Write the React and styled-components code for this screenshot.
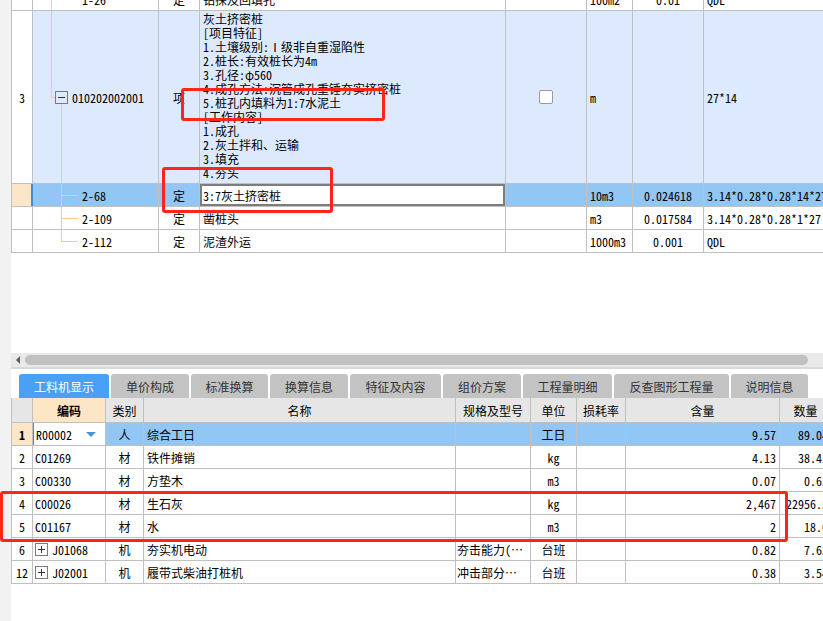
import React from 'react'
import styled, { createGlobalStyle } from 'styled-components'

const GlobalStyle = createGlobalStyle`
  *, *::before, *::after { box-sizing: border-box; }
  html, body { margin: 0; padding: 0; background: #fff; }
  body {
    font-family: "Noto Sans Mono CJK SC", "Noto Sans CJK SC", sans-serif;
    font-size: 12px;
    color: #000;
    overflow: hidden;
  }
`

const LINE = '#c0c0c0'
const TREE = '#f8c98c'
const SEL = '#92c6f4'
const LIGHT = '#dde9fd'
const ORANGE = '#fde6c6'

const Page = styled.div`
  position: relative;
  display: flex;
  width: 823px;
  height: 621px;
  overflow: hidden;
  background: #fff;
`

const LeftStrip = styled.div`
  flex: 0 0 11px;
  background: #f2f2f2;
`

const Main = styled.div`
  flex: 1;
  min-width: 0;
  display: flex;
  flex-direction: column;
  overflow: hidden;
`

const Grid = styled.div`
  width: max-content;
  border-left: 1px solid ${LINE};
  margin-top: ${p => p.$offset || 0}px;
`

const Row = styled.div`
  display: flex;
  height: ${p => p.$h || 23}px;
  border-bottom: 1px solid ${LINE};
  background: ${p => p.$bg || '#fff'};
`

const Cell = styled.div`
  position: relative;
  flex: 0 0 ${p => p.$w}px;
  width: ${p => p.$w}px;
  border-right: 1px solid ${LINE};
  display: flex;
  align-items: center;
  justify-content: ${p => (p.$align === 'center' ? 'center' : p.$align === 'right' ? 'flex-end' : 'flex-start')};
  padding: 0 ${p => (p.$pad != null ? p.$pad : 3)}px;
  background: ${p => p.$bg || 'transparent'};
  font-weight: ${p => (p.$bold ? 700 : 400)};
  white-space: nowrap;
  overflow: hidden;
`

const SelNum = styled(Cell)`
  background: ${ORANGE};
  border-right: 1px solid #3b8de0;
  box-shadow: inset -1px 0 0 #3b8de0;
`

const EditCell = styled(Cell)`
  background: #fff;
  box-shadow: inset 0 0 0 2px #7d7d7d;
`

const DescCell = styled(Cell)`
  display: block;
  padding: 1px 3px 0;
  line-height: 14px;
  white-space: pre;
`

const line = (pos, size) => `linear-gradient(${TREE}, ${TREE}) ${pos} / ${size} no-repeat`

const treeBg = {
  through: line('18px 0', '1px 100%'),
  parent: [line('18px 0', '1px 50%'), line('18px 50%', '5px 1px'), line('28px 100%', '1px 50%')].join(', '),
  child: [line('28px 0', '1px 100%'), line('28px 50%', '17px 1px')].join(', '),
  last: [line('28px 0', '1px 50%'), line('28px 50%', '17px 1px')].join(', ')
}

const TreeCell = styled(Cell)`
  padding-left: ${p => (p.$kind === 'parent' ? 22 : 49)}px;
  background: ${p => treeBg[p.$kind]}${p => (p.$fill ? `, ${p.$fill}` : '')};
`

const ToggleBox = styled.span`
  position: relative;
  flex: 0 0 13px;
  width: 13px;
  height: 13px;
  margin-right: 4px;
  border: 1px solid #7a7a7a;
  background: ${p => p.$bg || '#fff'};
  &::before {
    content: '';
    position: absolute;
    left: 2px;
    right: 2px;
    top: 5px;
    height: 1px;
    background: #333;
  }
  &::after {
    content: '';
    display: ${p => (p.$plus ? 'block' : 'none')};
    position: absolute;
    top: 2px;
    bottom: 2px;
    left: 5px;
    width: 1px;
    background: #333;
  }
`

const Check = styled.span`
  width: 14px;
  height: 14px;
  border: 1px solid #9a9a9a;
  border-radius: 2px;
  background: #fff;
`

const Blank = styled.div`
  flex: 0 0 100px;
`

const ScrollBar = styled.div`
  flex: 0 0 14px;
  display: flex;
  align-items: center;
  background: #e9e9e9;
  padding-left: 5px;
`

const ArrowLeft = styled.span`
  width: 0;
  height: 0;
  border-top: 4px solid transparent;
  border-bottom: 4px solid transparent;
  border-right: 4px solid #5c5c5c;
  margin-right: 5px;
`

const Thumb = styled.div`
  width: 783px;
  height: 10px;
  border-radius: 5px;
  background: #c1c1c1;
`

const Divider = styled.div`
  flex: 0 0 2px;
  background: #d9d9d9;
`

const TabBar = styled.div`
  display: flex;
  gap: 2px;
  padding: 5px 0 0 8px;
`

const Tab = styled.div`
  flex: 0 0 ${p => p.$w}px;
  height: 24px;
  display: flex;
  align-items: center;
  justify-content: center;
  border-radius: 3px 3px 0 0;
  font-family: "Noto Sans CJK SC", sans-serif;
  font-size: 12px;
  color: ${p => (p.$active ? '#fff' : '#333')};
  background: ${p => (p.$active ? '#4aa0f6' : '#c3c3c3')};
`

const HeadRow = styled(Row)`
  background: #e6e6e6;
`

const Dropdown = styled.span`
  margin-left: auto;
  margin-right: 6px;
  width: 0;
  height: 0;
  border-left: 5px solid transparent;
  border-right: 5px solid transparent;
  border-top: 5px solid #4f8fd6;
`

const CodeEdit = styled(Cell)`
  background: #fff;
  box-shadow: inset 1px 0 0 #3b8de0;
`

const Mark = styled.div`
  position: absolute;
  left: ${p => p.$x}px;
  top: ${p => p.$y}px;
  width: ${p => p.$w}px;
  height: ${p => p.$h}px;
  border: 3px solid #ff2619;
  border-radius: 3px;
  pointer-events: none;
`

const TW = [21, 126, 41, 306, 81, 46, 71, 150]
const BW = [21, 73, 38, 312, 75, 46, 49, 154, 52]

const desc = `灰土挤密桩
[项目特征]
1.土壤级别:Ⅰ级非自重湿陷性
2.桩长:有效桩长为4m
3.孔径:φ560
4.成孔方法:沉管成孔重锤夯实挤密桩
5.桩孔内填料为1:7水泥土
[工作内容]
1.成孔
2.灰土拌和、运输
3.填充
4.夯头`

const subRows = [
  { code: '2-109', name: '凿桩头', unit: 'm3', qty: '0.017584', expr: '3.14*0.28*0.28*1*27', kind: 'child' },
  { code: '2-112', name: '泥渣外运', unit: '1000m3', qty: '0.001', expr: 'QDL', kind: 'last' }
]

const tabs = [
  ['工料机显示', 90], ['单价构成', 78], ['标准换算', 77], ['换算信息', 78], ['特征及内容', 91],
  ['组价方案', 78], ['工程量明细', 89], ['反查图形工程量', 115], ['说明信息', 77]
]

const materials = [
  { n: '2', code: 'C01269', type: '材', name: '铁件摊销', unit: 'kg', amt: '4.13', qty: '38.41' },
  { n: '3', code: 'C00330', type: '材', name: '方垫木', unit: 'm3', amt: '0.07', qty: '0.65' },
  { n: '4', code: 'C00026', type: '材', name: '生石灰', unit: 'kg', amt: '2,467', qty: '22956.5' },
  { n: '5', code: 'C01167', type: '材', name: '水', unit: 'm3', amt: '2', qty: '18.6' },
  { n: '6', code: 'J01068', type: '机', name: '夯实机电动', spec: '夯击能力(…', unit: '台班', amt: '0.82', qty: '7.63', plus: true },
  { n: '12', code: 'J02001', type: '机', name: '履带式柴油打桩机', spec: '冲击部分…', unit: '台班', amt: '0.38', qty: '3.54', plus: true }
]

const TopTable = () => (
  <Grid $offset={-12}>
    <Row>
      <Cell $w={TW[0]} />
      <TreeCell $w={TW[1]} $kind="through">1-26</TreeCell>
      <Cell $w={TW[2]} $align="center">定</Cell>
      <Cell $w={TW[3]}>钻探及回填孔</Cell>
      <Cell $w={TW[4]} />
      <Cell $w={TW[5]}>100m2</Cell>
      <Cell $w={TW[6]} $align="center">0.01</Cell>
      <Cell $w={TW[7]}>QDL</Cell>
    </Row>
    <Row $h={173} $bg={LIGHT}>
      <Cell $w={TW[0]} $align="center" $bg="#fff">3</Cell>
      <TreeCell $w={TW[1]} $kind="parent">
        <ToggleBox $bg={LIGHT} />
        010202002001
      </TreeCell>
      <Cell $w={TW[2]} $align="center">项</Cell>
      <DescCell $w={TW[3]}>{desc}</DescCell>
      <Cell $w={TW[4]} $align="center"><Check /></Cell>
      <Cell $w={TW[5]}>m</Cell>
      <Cell $w={TW[6]} />
      <Cell $w={TW[7]}>27*14</Cell>
    </Row>
    <Row $bg={SEL}>
      <SelNum $w={TW[0]} />
      <TreeCell $w={TW[1]} $kind="child">2-68</TreeCell>
      <Cell $w={TW[2]} $align="center">定</Cell>
      <EditCell $w={TW[3]}>3:7灰土挤密桩</EditCell>
      <Cell $w={TW[4]} />
      <Cell $w={TW[5]}>10m3</Cell>
      <Cell $w={TW[6]} $align="center">0.024618</Cell>
      <Cell $w={TW[7]}>3.14*0.28*0.28*14*27</Cell>
    </Row>
    {subRows.map(r => (
      <Row key={r.code}>
        <Cell $w={TW[0]} />
        <TreeCell $w={TW[1]} $kind={r.kind}>{r.code}</TreeCell>
        <Cell $w={TW[2]} $align="center">定</Cell>
        <Cell $w={TW[3]}>{r.name}</Cell>
        <Cell $w={TW[4]} />
        <Cell $w={TW[5]}>{r.unit}</Cell>
        <Cell $w={TW[6]} $align="center">{r.qty}</Cell>
        <Cell $w={TW[7]}>{r.expr}</Cell>
      </Row>
    ))}
  </Grid>
)

const BottomTable = () => (
  <Grid>
    <HeadRow $h={25}>
      <Cell $w={BW[0]} />
      <Cell $w={BW[1]} $align="center" $bg={ORANGE} $bold>编码</Cell>
      <Cell $w={BW[2]} $align="center">类别</Cell>
      <Cell $w={BW[3]} $align="center">名称</Cell>
      <Cell $w={BW[4]} $align="center">规格及型号</Cell>
      <Cell $w={BW[5]} $align="center">单位</Cell>
      <Cell $w={BW[6]} $align="center">损耗率</Cell>
      <Cell $w={BW[7]} $align="center">含量</Cell>
      <Cell $w={BW[8]} $align="center">数量</Cell>
    </HeadRow>
    <Row $bg={SEL}>
      <Cell $w={BW[0]} $align="center" $bg={ORANGE} $bold>1</Cell>
      <CodeEdit $w={BW[1]}>R00002<Dropdown /></CodeEdit>
      <Cell $w={BW[2]} $align="center">人</Cell>
      <Cell $w={BW[3]}>综合工日</Cell>
      <Cell $w={BW[4]} />
      <Cell $w={BW[5]} $align="center">工日</Cell>
      <Cell $w={BW[6]} />
      <Cell $w={BW[7]} $align="right">9.57</Cell>
      <Cell $w={BW[8]} $align="right">89.04</Cell>
    </Row>
    {materials.map(m => (
      <Row key={m.n}>
        <Cell $w={BW[0]} $align="center">{m.n}</Cell>
        <Cell $w={BW[1]} $pad={2}>
          {m.plus && <ToggleBox $plus />}
          {m.code}
        </Cell>
        <Cell $w={BW[2]} $align="center">{m.type}</Cell>
        <Cell $w={BW[3]}>{m.name}</Cell>
        <Cell $w={BW[4]} $pad={1}>{m.spec}</Cell>
        <Cell $w={BW[5]} $align="center">{m.unit}</Cell>
        <Cell $w={BW[6]} />
        <Cell $w={BW[7]} $align="right">{m.amt}</Cell>
        <Cell $w={BW[8]} $align="right">{m.qty}</Cell>
      </Row>
    ))}
  </Grid>
)

export default function App() {
  return (
    <>
      <GlobalStyle />
      <Page>
        <LeftStrip />
        <Main>
          <TopTable />
          <Blank />
          <ScrollBar>
            <ArrowLeft />
            <Thumb />
          </ScrollBar>
          <Divider />
          <TabBar>
            {tabs.map(([t, w], i) => (
              <Tab key={t} $w={w} $active={i === 0}>{t}</Tab>
            ))}
          </TabBar>
          <BottomTable />
        </Main>
        <Mark $x={181} $y={88} $w={204} $h={33} />
        <Mark $x={162} $y={167} $w={171} $h={46} />
        <Mark $x={0} $y={491} $w={788} $h={51} />
      </Page>
    </>
  )
}
